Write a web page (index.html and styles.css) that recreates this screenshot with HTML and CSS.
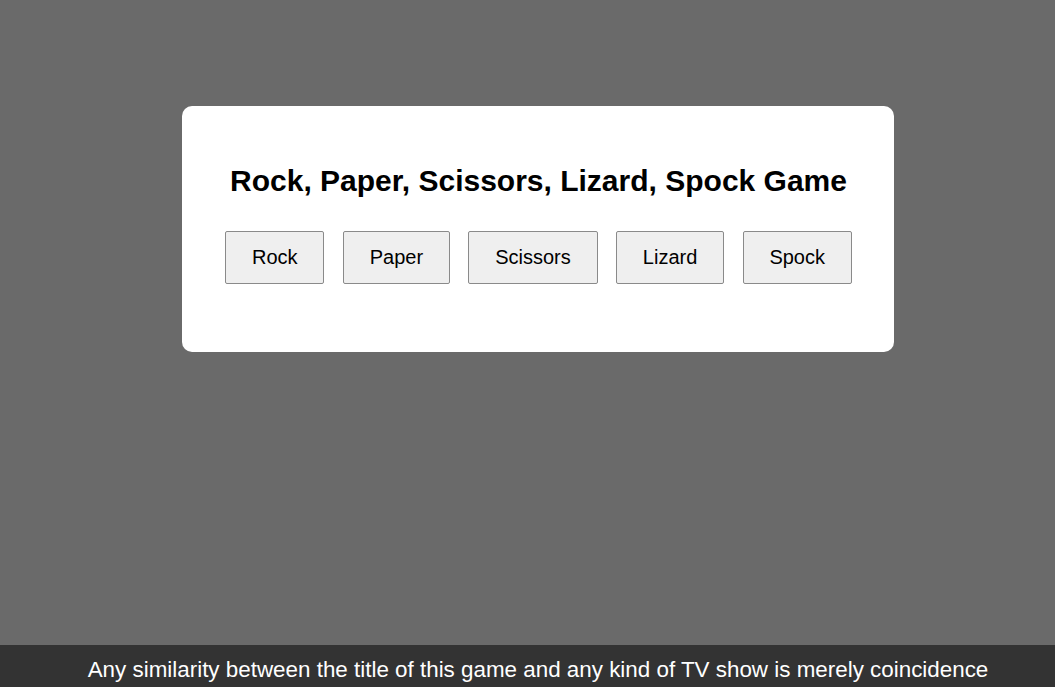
FILE: index.html
```html
<!DOCTYPE html>
<html lang="en">
<head>
<meta charset="utf-8">
<title>Rock, Paper, Scissors, Lizard, Spock Game</title>
<link rel="stylesheet" href="styles.css">
</head>
<body>
<main class="page">
  <section class="card">
    <h1 class="title">Rock, Paper, Scissors, Lizard, Spock Game</h1>
    <div class="choices">
      <button class="choice">Rock</button>
      <button class="choice">Paper</button>
      <button class="choice">Scissors</button>
      <button class="choice">Lizard</button>
      <button class="choice">Spock</button>
    </div>
  </section>
</main>
<footer class="footer">Any similarity between the title of this game and any kind of TV show is merely coincidence</footer>
</body>
</html>
```

FILE: styles.css
```css
html, body {
  margin: 0;
  padding: 0;
  height: 100%;
}
body {
  background: #6a6a6a;
  font-family: "Liberation Sans", Arial, sans-serif;
  display: flex;
  flex-direction: column;
}
.page {
  flex: 1;
  display: flex;
  justify-content: center;
  align-items: flex-start;
  padding: 106px 0 0 21px;
}
.card {
  width: 712px;
  box-sizing: border-box;
  background: #fff;
  border-radius: 10px;
  padding: 57px 20px 68px 21px;
  display: flex;
  flex-direction: column;
  align-items: center;
}
.title {
  margin: 0 0 33px;
  font-size: 30px;
  font-weight: bold;
  line-height: 35px;
  color: #000;
  text-align: center;
}
.choices {
  display: flex;
  gap: 18.5px;
}
.choice {
  font-family: "Liberation Sans", Arial, sans-serif;
  font-size: 20px;
  line-height: 23px;
  padding: 14px 25.8px;
  background: #efefef;
  color: #000;
  border: 1px solid #8a8a8a;
  border-radius: 2px;
}
.footer {
  background: #333;
  color: #fff;
  height: 42px;
  box-sizing: border-box;
  padding: 12px 0 0 21px;
  font-size: 22.4px;
  line-height: 26px;
  text-align: center;
}
```
